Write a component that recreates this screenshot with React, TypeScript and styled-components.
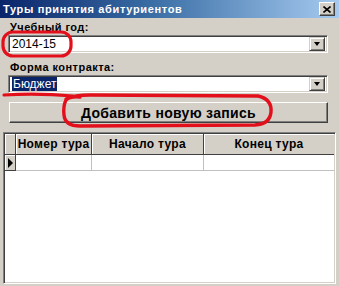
import React from "react";
import styled, { createGlobalStyle } from "styled-components";

const Global = createGlobalStyle`
  html, body { margin: 0; padding: 0; background: #d4d0c8; }
  body { width: 339px; height: 286px; overflow: hidden; }
  * { box-sizing: border-box; }
`;

const Window = styled.div`
  position: relative;
  width: 339px;
  height: 286px;
  background: #d4d0c8;
  display: flex;
  flex-direction: column;
  font-family: "Liberation Sans", Arial, sans-serif;
  overflow: hidden;
`;

const TitleBar = styled.div`
  height: 18px;
  flex: none;
  display: flex;
  align-items: center;
  justify-content: space-between;
  padding: 0 4px 0 3px;
  background: linear-gradient(to right, #0a246a 0%, #3a6ea5 45%, #a6caf0 100%);
`;

const TitleText = styled.span`
  color: #ffffff;
  font-weight: bold;
  font-size: 11px;
  letter-spacing: 0.65px;
`;

const CloseButton = styled.div`
  width: 16px;
  height: 14px;
  background: #d4d0c8;
  border: 1px solid;
  border-color: #ffffff #404040 #404040 #ffffff;
  box-shadow: inset -1px -1px 0 #808080;
  display: flex;
  align-items: center;
  justify-content: center;
`;

const Body = styled.div`
  flex: 1;
  display: flex;
  flex-direction: column;
  padding: 0 3px 2px 3px;
`;

const Form = styled.div`
  display: flex;
  flex-direction: column;
  padding: 0 8px 0 5px;
`;

const Label = styled.div<{ $top: number }>`
  margin-top: ${(p) => p.$top}px;
  height: 13px;
  line-height: 13px;
  font-size: 11px;
  font-weight: bold;
  letter-spacing: 0.45px;
  color: #000;
  padding-left: 2px;
`;

const Combo = styled.div`
  margin-top: 1px;
  height: 18px;
  background: #ffffff;
  border: 1px solid;
  border-color: #808080 #ffffff #ffffff #808080;
  box-shadow: inset 1px 1px 0 #404040, inset -1px -1px 0 #d4d0c8;
  display: flex;
  align-items: center;
  padding: 2px 2px 2px 3px;
`;

const ComboText = styled.span<{ $selected?: boolean }>`
  flex: 1;
  font-size: 12px;
  line-height: 14px;
  color: ${(p) => (p.$selected ? "#ffffff" : "#000000")};
  span {
    background: ${(p) => (p.$selected ? "#0a246a" : "transparent")};
    padding: 0 1px;
  }
`;

const DropButton = styled.div`
  width: 16px;
  height: 14px;
  background: #d4d0c8;
  border: 1px solid;
  border-color: #d4d0c8 #404040 #404040 #d4d0c8;
  box-shadow: inset 1px 1px 0 #ffffff, inset -1px -1px 0 #808080;
  display: flex;
  align-items: center;
  justify-content: center;
`;

const Arrow = styled.div`
  width: 0;
  height: 0;
  border-left: 3.5px solid transparent;
  border-right: 3.5px solid transparent;
  border-top: 4px solid #000;
`;

const AddButton = styled.div`
  margin-top: 9px;
  margin-left: 1px;
  height: 21px;
  background: #d4d0c8;
  border: 1px solid;
  border-color: #ffffff #404040 #404040 #ffffff;
  box-shadow: inset -1px -1px 0 #808080;
  display: flex;
  align-items: center;
  justify-content: center;
  font-size: 14px;
  font-weight: bold;
  letter-spacing: 0.3px;
  color: #000;
`;

const Grid = styled.div`
  margin-top: 9px;
  flex: 1;
  background: #ffffff;
  border: 1px solid;
  border-color: #808080 #ffffff #ffffff #808080;
  box-shadow: inset 1px 1px 0 #404040, inset -1px -1px 0 #d4d0c8;
  padding: 1px;
  display: flex;
  flex-direction: column;
`;

const GridRow = styled.div<{ $h: number }>`
  display: grid;
  grid-template-columns: 11px 76px 112px 1fr;
  height: ${(p) => p.$h}px;
`;

const HeaderCell = styled.div`
  background: #d4d0c8;
  border-right: 1px solid #404040;
  border-bottom: 1px solid #404040;
  box-shadow: inset 1px 1px 0 #ffffff;
  display: flex;
  align-items: center;
  justify-content: center;
  font-size: 12px;
  font-weight: bold;
  letter-spacing: 0.3px;
  color: #000;
  white-space: nowrap;
  &:last-child { border-right: none; }
`;

const IndicatorCell = styled.div`
  background: #d4d0c8;
  border-right: 1px solid #404040;
  border-bottom: 1px solid #404040;
  box-shadow: inset 1px 1px 0 #ffffff;
  display: flex;
  align-items: center;
  justify-content: center;
`;

const DataCell = styled.div`
  border-right: 1px solid #c0c0c0;
  border-bottom: 1px solid #c0c0c0;
  &:last-child { border-right: none; }
`;

const RowArrow = styled.div`
  width: 0;
  height: 0;
  border-top: 5px solid transparent;
  border-bottom: 5px solid transparent;
  border-left: 5px solid #000;
  margin-left: 1px;
`;

const Annotations = styled.svg`
  position: absolute;
  left: 0;
  top: 0;
  width: 339px;
  height: 286px;
  pointer-events: none;
`;

export default function App() {
  return (
    <>
      <Global />
      <Window>
        <TitleBar>
          <TitleText>Туры принятия абитуриентов</TitleText>
          <CloseButton>
            <svg width="8" height="7" viewBox="0 0 8 7">
              <path d="M0.5 0.5 L7.5 6.5 M7.5 0.5 L0.5 6.5" stroke="#000" strokeWidth="1.6" />
            </svg>
          </CloseButton>
        </TitleBar>
        <Body>
          <Form>
            <Label $top={3}>Учебный год:</Label>
            <Combo>
              <ComboText>2014-15</ComboText>
              <DropButton>
                <Arrow />
              </DropButton>
            </Combo>
            <Label $top={8}>Форма контракта:</Label>
            <Combo>
              <ComboText $selected>
                <span>Бюджет</span>
              </ComboText>
              <DropButton>
                <Arrow />
              </DropButton>
            </Combo>
            <AddButton>Добавить новую запись</AddButton>
          </Form>
          <Grid>
            <GridRow $h={21}>
              <HeaderCell />
              <HeaderCell>Номер тура</HeaderCell>
              <HeaderCell>Начало тура</HeaderCell>
              <HeaderCell>Конец тура</HeaderCell>
            </GridRow>
            <GridRow $h={16}>
              <IndicatorCell>
                <RowArrow />
              </IndicatorCell>
              <DataCell />
              <DataCell />
              <DataCell />
            </GridRow>
          </Grid>
        </Body>
        <Annotations viewBox="0 0 339 286">
          <rect x="3" y="32" width="68" height="24" rx="10" fill="none" stroke="#e3101c" strokeWidth="3.2" />
          <path d="M4 95 Q38 93 73 96" fill="none" stroke="#e3101c" strokeWidth="3.2" strokeLinecap="round" />
          <path
            d="M80 97 Q70 96 66 100 Q63 106 64 115 Q65 126 80 126 L255 125 Q270 124 271 112 Q272 99 258 96 L90 95 Q75 95 66 99"
            fill="none"
            stroke="#e3101c"
            strokeWidth="3.4"
            strokeLinecap="round"
          />
        </Annotations>
      </Window>
    </>
  );
}
